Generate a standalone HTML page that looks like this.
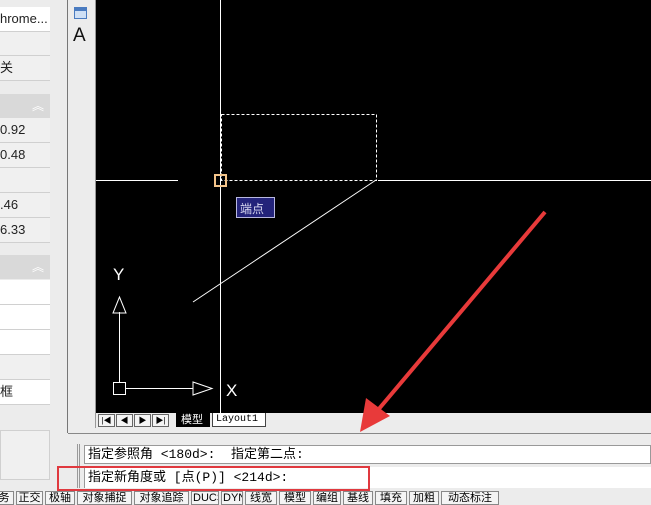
<!DOCTYPE html>
<html><head><meta charset="utf-8"><style>
body{margin:0;width:651px;height:505px;overflow:hidden;background:#ececec;position:relative;font-family:"Liberation Sans","Noto Sans CJK SC",sans-serif;}
div{position:absolute;box-sizing:border-box}
.r{left:0;width:50px;border-bottom:1px solid #d0d0d0;font-size:13px;line-height:24px;color:#222;background:#f0f0f0}
.w{background:#fff}
.h{left:0;width:50px;background:#d9d9d9;height:24px;color:#fff;font-size:12px;text-align:right;padding-right:6px;line-height:24px}
.mono{font-family:"Liberation Mono","Noto Sans CJK SC",monospace}
.sb{top:491px;height:14px;font-size:11px;line-height:13px;border:1px solid #888;background:#f4f4f4;padding:0 1px;white-space:nowrap;overflow:hidden;text-align:center}
.nb{top:1px;width:17px;height:13px;border:1px solid #666;background:#f4f4f4;font-size:8px;line-height:11px;text-align:center}
</style></head><body>
<div class="r w" style="top:7px;height:25px">hrome...</div>
<div class="r" style="top:32px;height:24px"></div>
<div class="r" style="top:56px;height:25px">关</div>
<div class="h" style="top:94px">︽</div>
<div class="r" style="top:118px;height:25px">0.92</div>
<div class="r" style="top:143px;height:25px">0.48</div>
<div class="r" style="top:168px;height:25px"></div>
<div class="r" style="top:193px;height:25px">.46</div>
<div class="r" style="top:218px;height:25px">6.33</div>
<div class="h" style="top:255px">︽</div>
<div class="r w" style="top:280px;height:25px"></div>
<div class="r w" style="top:305px;height:25px"></div>
<div class="r w" style="top:330px;height:25px"></div>
<div class="r" style="top:355px;height:25px"></div>
<div class="r w" style="top:380px;height:25px">框</div>
<div class="r" style="top:430px;height:50px;border:1px solid #d0d0d0"></div>
<div style="left:67px;top:0;width:1px;height:433px;background:#777"></div>
<div style="left:68px;top:0;width:28px;height:428px;background:#ececec;border-right:1px solid #999"></div>
<div style="left:74px;top:7px;width:13px;height:12px;border:1px solid #4a7bc0;background:linear-gradient(#4a7bc0 3px,#cfe0f5 3px)"></div>
<div style="left:73px;top:25px;font-size:19px;color:#111">A</div>
<div style="left:96px;top:0;width:555px;height:413px;background:#000"></div>
<div style="left:96px;top:413px;width:555px;height:15px;background:#ececec;font-size:11px">
<div class="nb" style="left:2px">|◀</div>
<div class="nb" style="left:20px">◀</div>
<div class="nb" style="left:38px">▶</div>
<div class="nb" style="left:56px">▶|</div>
<div style="left:80px;top:0;width:34px;height:14px;background:#000;color:#fff;font-size:11px;line-height:14px;padding-left:5px">模型</div>
<div class="mono" style="left:116px;top:0;width:54px;height:14px;border:1px solid #444;border-top:none;background:#fff;font-size:10px;line-height:13px;padding-left:3px">Layout1</div>
</div>
<div style="left:68px;top:433px;width:583px;height:1px;background:#888"></div>
<div style="left:77px;top:444px;width:3px;height:44px;border-left:1px solid #999;border-right:1px solid #999"></div>
<div class="mono" style="left:84px;top:445px;width:567px;height:19px;background:#fff;border:1px solid #999;font-size:13px;line-height:17px;padding-left:3px;white-space:pre">指定参照角 &lt;180d&gt;:  指定第二点:</div>
<div class="mono" style="left:84px;top:467px;width:567px;height:21px;background:#fff;border-left:1px solid #999;font-size:13px;line-height:21px;padding-left:3px;white-space:pre">指定新角度或 [点(P)] &lt;214d&gt;:</div>
<div style="left:57px;top:466px;width:313px;height:25px;border:2px solid #e0393f"></div>
<svg style="position:absolute;left:0;top:0" width="651" height="505">
<line x1="220.5" y1="0" x2="220.5" y2="413" stroke="#fff"/>
<line x1="96" y1="180.5" x2="178" y2="180.5" stroke="#fff"/>
<line x1="378" y1="180.5" x2="651" y2="180.5" stroke="#fff"/>
<rect x="221.5" y="114.5" width="155" height="66" fill="none" stroke="#fff" stroke-dasharray="3,2"/>
<line x1="376" y1="180" x2="193" y2="302" stroke="#fff"/>
<rect x="215" y="175" width="11" height="11" fill="none" stroke="#f3c48a" stroke-width="2"/>
<rect x="236.5" y="197.5" width="38" height="20" fill="#23237a" stroke="#b8b8e0"/>
<text x="240" y="213" fill="#d8d8f0" font-size="12" font-family="Noto Sans CJK SC">端点</text>
<line x1="119.5" y1="312" x2="119.5" y2="382" stroke="#fff"/>
<polygon points="119.5,297 113,313 126,313" fill="none" stroke="#fff"/>
<rect x="113.5" y="382.5" width="12" height="12" fill="none" stroke="#fff"/>
<line x1="126" y1="388.5" x2="193" y2="388.5" stroke="#fff"/>
<polygon points="212,388.5 193,382 193,395" fill="none" stroke="#fff"/>
<text x="113" y="280" fill="#fff" font-size="17">Y</text>
<text x="226" y="396" fill="#fff" font-size="17">X</text>
<line x1="545" y1="212" x2="378" y2="410" stroke="#e83a3a" stroke-width="4"/>
<polygon points="360,432 366,398 390,416" fill="#e83a3a"/>
</svg>
<div class="sb" style="left:-6px;width:20px">务</div>
<div class="sb" style="left:16px;width:27px">正交</div>
<div class="sb" style="left:45px;width:30px">极轴</div>
<div class="sb" style="left:77px;width:55px">对象捕捉</div>
<div class="sb" style="left:134px;width:55px">对象追踪</div>
<div class="sb" style="left:191px;width:28px">DUCS</div>
<div class="sb" style="left:221px;width:22px">DYN</div>
<div class="sb" style="left:245px;width:32px">线宽</div>
<div class="sb" style="left:279px;width:32px">模型</div>
<div class="sb" style="left:313px;width:28px">编组</div>
<div class="sb" style="left:343px;width:30px">基线</div>
<div class="sb" style="left:375px;width:32px">填充</div>
<div class="sb" style="left:409px;width:30px">加粗</div>
<div class="sb" style="left:441px;width:58px">动态标注</div>
</body></html>
